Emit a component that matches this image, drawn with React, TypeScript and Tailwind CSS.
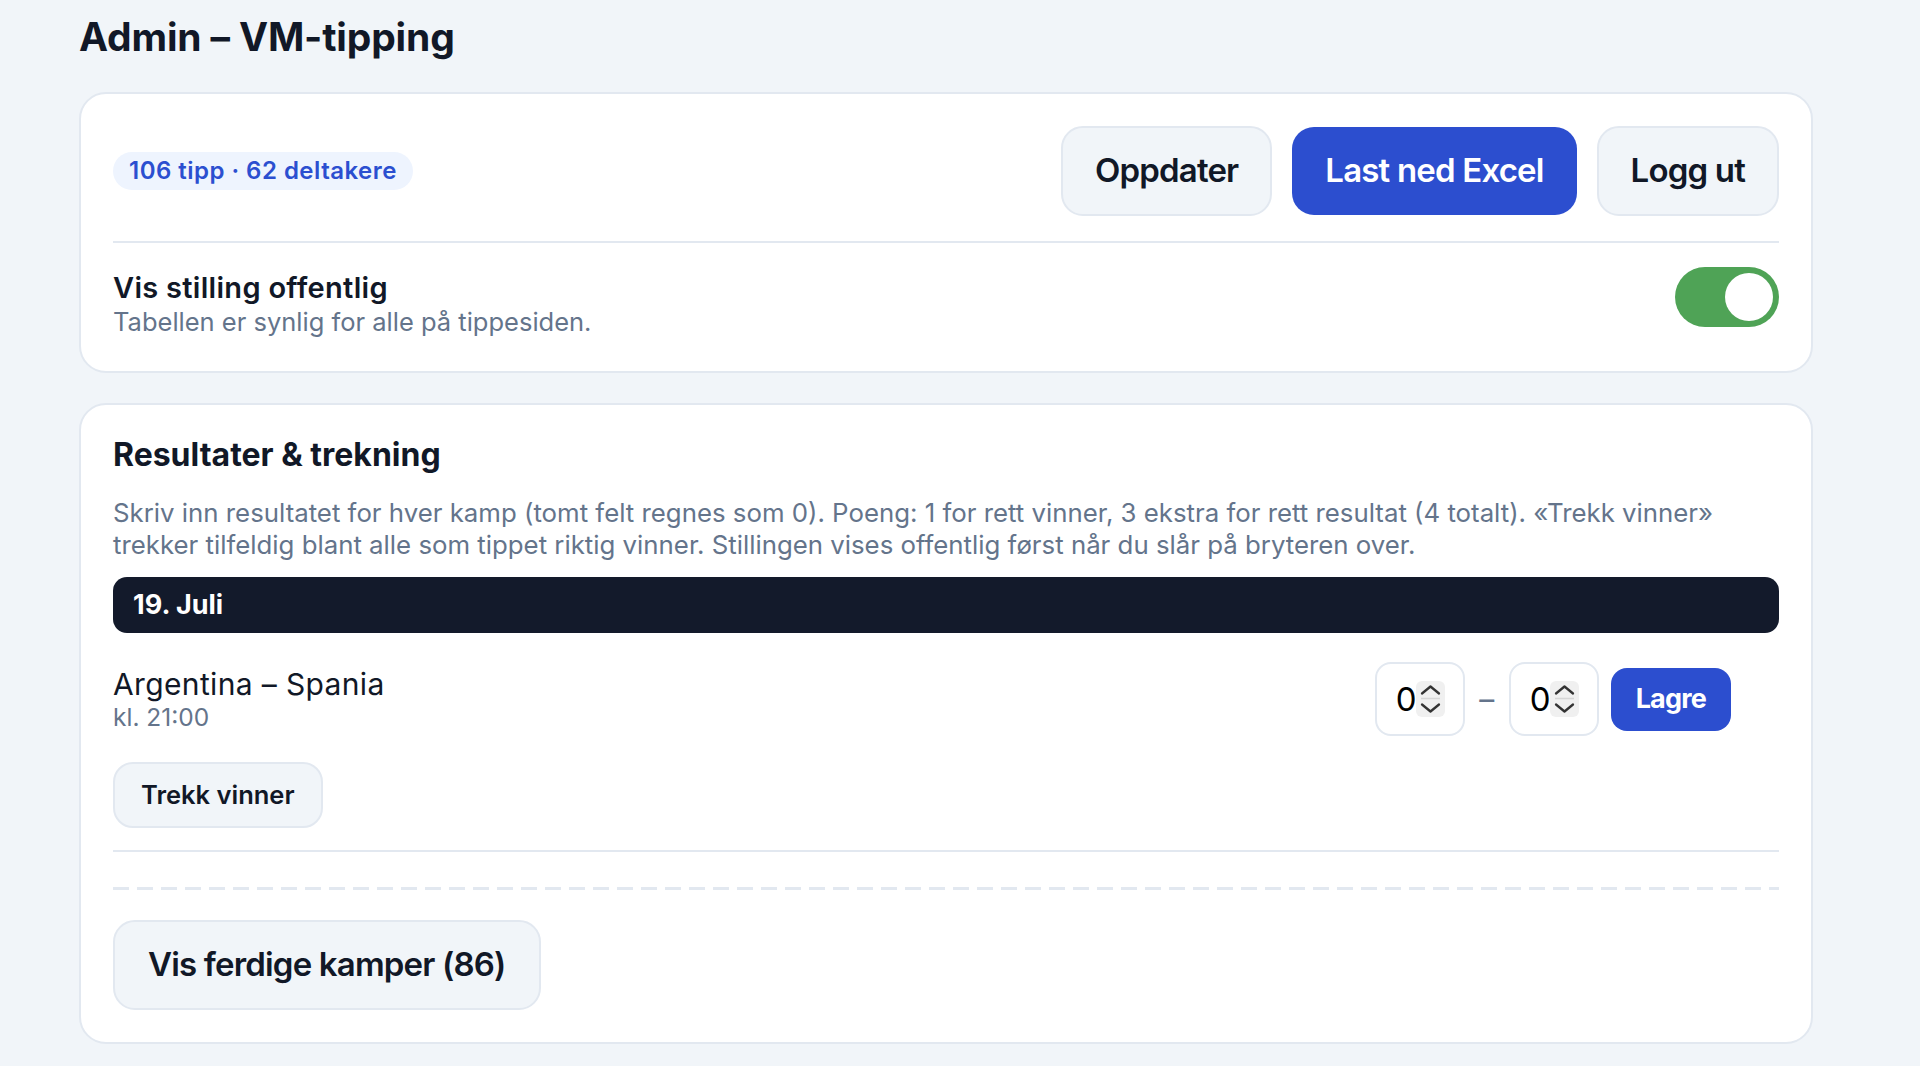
import React from 'react'

function Stepper() {
  return (
    <svg width="29" height="36" viewBox="0 0 29 36" className="shrink-0">
      <rect x="0" y="0" width="29" height="36" rx="6" fill="#f0f0f0" />
      <path d="M6 12.5 L14.5 5.5 L23 12.5" fill="none" stroke="#333" strokeWidth="2.3" strokeLinecap="round" strokeLinejoin="round" />
      <line x1="5" y1="17.5" x2="24" y2="17.5" stroke="#d6d6d6" strokeWidth="1.5" />
      <path d="M6 23.5 L14.5 30.5 L23 23.5" fill="none" stroke="#333" strokeWidth="2.3" strokeLinecap="round" strokeLinejoin="round" />
    </svg>
  )
}

function ScoreInput() {
  return (
    <div className="flex h-[74px] w-[90px] items-center justify-between rounded-[16px] border-2 border-[#e2e8f0] bg-white pl-[19px] pr-[18px]">
      <span className="text-[33px] leading-none text-black">0</span>
      <Stepper />
    </div>
  )
}

export default function App() {
  return (
    <div className="min-h-screen bg-[#f1f5f9] pb-2 pl-[79px] pr-[107px] pt-[13px] font-[Inter,sans-serif] text-[#111827]">
      <h1 className="text-[39px] font-bold leading-[48px] tracking-[-0.004em]">Admin – VM-tipping</h1>

      {/* status / actions */}
      <section className="mt-[31px] rounded-[27px] border-2 border-[#e2e8f0] bg-white px-8 pb-[36px] pt-[32px]">
        <div className="flex items-center justify-between border-b-2 border-[#e2e8f0] pb-[25px]">
          <span className="flex h-[38px] items-center rounded-full bg-[#eef4fe] px-4 text-[24px] font-semibold tracking-[0.02em] text-[#2b4fd0]">
            106 tipp · 62 deltakere
          </span>
          <div className="flex items-center gap-5">
            <button className="h-[90px] rounded-[22px] border-2 border-[#e2e8f0] bg-[#f1f5f9] px-[32px] text-[33px] font-semibold tracking-[-0.025em]">
              Oppdater
            </button>
            <button className="h-[88px] rounded-[22px] bg-[#2c4ecf] px-[33px] text-[33px] font-semibold tracking-[-0.025em] text-white">
              Last ned Excel
            </button>
            <button className="h-[90px] rounded-[22px] border-2 border-[#e2e8f0] bg-[#f1f5f9] px-[32px] text-[33px] font-semibold tracking-[-0.025em]">
              Logg ut
            </button>
          </div>
        </div>
        <div className="flex items-start justify-between pt-6">
          <div>
            <div className="text-[29px] font-semibold leading-[42px] tracking-[0.01em]">Vis stilling offentlig</div>
            <div className="text-[25.5px] leading-[26px] text-[#64748b]">Tabellen er synlig for alle på tippesiden.</div>
          </div>
          <div className="flex h-[60px] w-[104px] justify-end rounded-full bg-[#4fa356] p-[6px]">
            <div className="h-12 w-12 rounded-full bg-white" />
          </div>
        </div>
      </section>

      {/* results */}
      <section className="mt-[30px] rounded-[27px] border-2 border-[#e2e8f0] bg-white px-8 pb-8 pt-[30px]">
        <h2 className="text-[32px] font-bold leading-[40px]">Resultater &amp; trekning</h2>
        <p className="mt-[22px] text-[25.8px] leading-[32px] text-[#64748b]">
          Skriv inn resultatet for hver kamp (tomt felt regnes som 0). Poeng: 1 for rett vinner, 3 ekstra for rett resultat (4 totalt). «Trekk vinner» trekker tilfeldig blant alle som tippet riktig vinner. Stillingen vises offentlig først når du slår på bryteren over.
        </p>
        <div className="mt-4 flex h-[56px] items-center rounded-[14px] bg-[#131a2b] px-5 text-[27px] font-bold text-white">
          19. Juli
        </div>

        <div className="border-b-2 border-[#e2e8f0] pb-[22px]">
          <div className="mt-[29px] flex items-center justify-between pr-[48px]">
            <div>
              <div className="text-[30px] leading-[36px] tracking-[0.012em]">Argentina – Spania</div>
              <div className="text-[24.5px] leading-[30px] text-[#64748b]">kl. 21:00</div>
            </div>
            <div className="flex items-center gap-3">
              <ScoreInput />
              <span className="w-5 text-center text-[30px] text-[#64748b]">–</span>
              <ScoreInput />
              <button className="h-[63px] rounded-[16px] bg-[#2c4ecf] px-[25px] text-[27px] font-bold tracking-[-0.03em] text-white">
                Lagre
              </button>
            </div>
          </div>
          <button className="mt-[26px] h-[66px] rounded-[20px] border-2 border-[#e2e8f0] bg-[#f1f5f9] px-[26px] text-[25.5px] font-semibold">
            Trekk vinner
          </button>
        </div>

        <div className="mt-[35px] h-[3px] bg-[repeating-linear-gradient(to_right,#e2e8f0_0_16px,transparent_16px_24px)]" />

        <button className="mt-[30px] h-[90px] rounded-[22px] border-2 border-[#e2e8f0] bg-[#f1f5f9] px-[33px] text-[33px] font-semibold tracking-[-0.025em]">
          Vis ferdige kamper (86)
        </button>
      </section>
    </div>
  )
}
